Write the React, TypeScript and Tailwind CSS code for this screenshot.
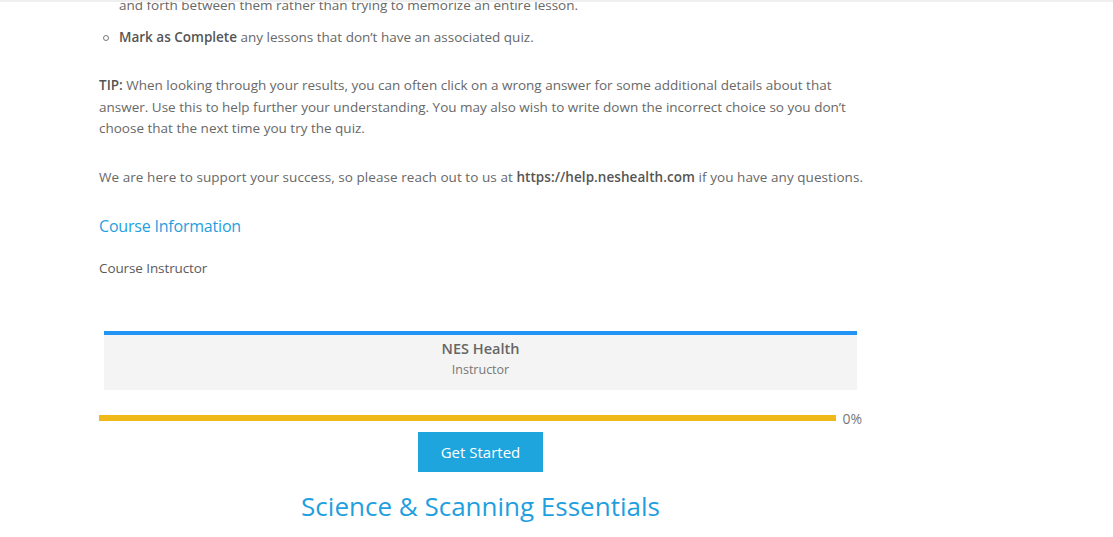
import React from "react";

const font = { fontFamily: '"Open Sans", "Noto Sans", sans-serif' };

export default function App() {
  return (
    <div
      className="relative h-[537px] w-full overflow-hidden bg-white text-[13.5px] text-[#686868]"
      style={font}
    >
      <div className="absolute left-0 right-0 top-0 z-10 h-[2px] bg-[#efefef]" />
      <div className="ml-[99px] w-[763px]">
        <ul className="mt-[-5px] leading-[21.5px]">
          <li className="pl-[20px]">
            and forth between them rather than trying to memorize an entire lesson.
          </li>
          <li className="mt-[10.5px] flex items-center">
            <span className="ml-[4px] mr-[10px] inline-block h-[6px] w-[6px] shrink-0 rounded-full border border-[#777]" />
            <span>
              <b className="font-semibold text-[#555]">Mark as Complete</b> any lessons that don’t have an associated quiz.
            </span>
          </li>
        </ul>
        <p className="mt-[26.5px] leading-[21.5px]">
          <b className="font-semibold text-[#555]">TIP:</b> When looking through your results, you can often click on a wrong answer for some additional details about that answer. Use this to help further your understanding. You may also wish to write down the incorrect choice so you don’t choose that the next time you try the quiz.
        </p>
        <p className="mt-[27.5px] whitespace-nowrap leading-[21.5px] tracking-[0.06px]">
          We are here to support your success, so please reach out to us at{" "}
          <b className="font-semibold text-[#555]">https://help.neshealth.com</b> if you have any questions.
        </p>
        <h2 className="mt-[25px] text-[16px] leading-[24px] tracking-[-0.2px] text-[#1f9fe0]">Course Information</h2>
        <div className="mt-[20px] text-[13.5px] leading-[21.5px] tracking-[-0.1px] text-[#5a5a5a]">
          Course Instructor
        </div>
        <div className="mx-[5px] mt-[52px] border-t-4 border-[#2194f4] bg-[#f4f4f4] pb-[11px] pt-[4px] text-center">
          <div className="text-[14.5px] font-semibold leading-[20px] text-[#666]">NES Health</div>
          <div className="mt-[2px] text-[12.5px] leading-[18px] text-[#777]">Instructor</div>
        </div>
        <div className="mt-[18px] flex h-[20px] items-center">
          <div className="h-[6px] flex-1 bg-[#f0b91a]" />
          <span className="ml-[6px] text-[14px] text-[#777]">0%</span>
        </div>
        <div className="mt-[4px] flex justify-center">
          <button className="h-[40px] w-[125px] bg-[#1ea5dd] text-[15px] font-medium text-white">
            Get Started
          </button>
        </div>
        <h1 className="mt-[17px] text-center text-[26px] leading-[34px] text-[#1f9fe0]">
          Science &amp; Scanning Essentials
        </h1>
      </div>
    </div>
  );
}
